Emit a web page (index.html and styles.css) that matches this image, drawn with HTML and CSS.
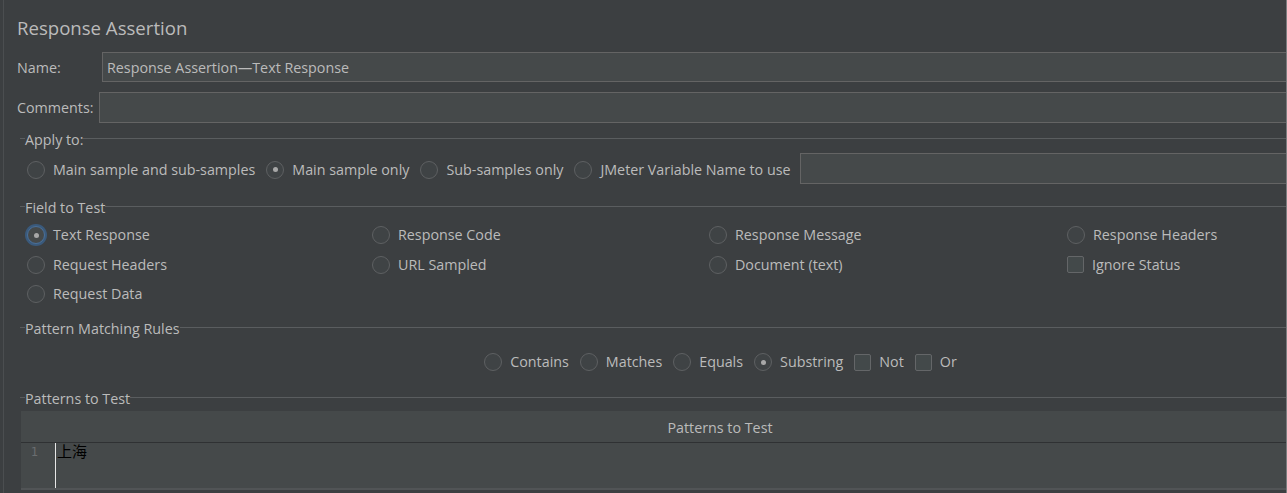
FILE: index.html
```html
<!DOCTYPE html>
<html>
<head>
<meta charset="utf-8">
<link rel="stylesheet" href="styles.css">
</head>
<body>
<div class="viewport">
  <div class="frame">
    <div class="title">Response Assertion</div>
    <div class="row name-row">
      <span class="label name-label">Name:</span>
      <div class="field">Response Assertion—Text Response</div>
    </div>
    <div class="row comments-row">
      <span class="label comments-label">Comments:</span>
      <div class="field"></div>
    </div>

    <section class="group apply">
      <div class="legend"><span>Apply to:</span></div>
      <div class="apply-row">
        <label class="opt"><span class="radio"></span><span>Main sample and sub-samples</span></label>
        <label class="opt"><span class="radio on"></span><span>Main sample only</span></label>
        <label class="opt"><span class="radio"></span><span>Sub-samples only</span></label>
        <label class="opt"><span class="radio"></span><span>JMeter Variable Name to use</span></label>
        <div class="field var-field"></div>
      </div>
    </section>

    <section class="group field-test">
      <div class="legend"><span>Field to Test</span></div>
      <div class="field-grid">
        <label class="opt"><span class="radio on focus"></span><span>Text Response</span></label>
        <label class="opt"><span class="radio"></span><span>Response Code</span></label>
        <label class="opt"><span class="radio"></span><span>Response Message</span></label>
        <label class="opt"><span class="radio"></span><span>Response Headers</span></label>
        <label class="opt"><span class="radio"></span><span>Request Headers</span></label>
        <label class="opt"><span class="radio"></span><span>URL Sampled</span></label>
        <label class="opt"><span class="radio"></span><span>Document (text)</span></label>
        <label class="opt"><span class="check"></span><span>Ignore Status</span></label>
        <label class="opt"><span class="radio"></span><span>Request Data</span></label>
      </div>
    </section>

    <section class="group pattern-rules">
      <div class="legend"><span>Pattern Matching Rules</span></div>
      <div class="rules-row">
        <label class="opt"><span class="radio"></span><span>Contains</span></label>
        <label class="opt"><span class="radio"></span><span>Matches</span></label>
        <label class="opt"><span class="radio"></span><span>Equals</span></label>
        <label class="opt"><span class="radio on"></span><span>Substring</span></label>
        <label class="opt"><span class="check"></span><span>Not</span></label>
        <label class="opt"><span class="check"></span><span>Or</span></label>
      </div>
    </section>

    <section class="group patterns">
      <div class="legend"><span>Patterns to Test</span></div>
      <div class="table">
        <div class="thead">Patterns to Test</div>
        <div class="tbody">
          <div class="gutter">1</div>
          <div class="editor">上海</div>
        </div>
      </div>
    </section>
  </div>
</div>
</body>
</html>
```

FILE: styles.css
```css
html, body {
  margin: 0;
  padding: 0;
  background: #3c3f41;
}

.viewport {
  width: 1287px;
  height: 493px;
  box-sizing: border-box;
  overflow: hidden;
  background: #3c3f41;
  border-right: 1px solid #7b7d7f;
  display: flex;
  font-family: "Open Sans", "Noto Sans", sans-serif;
  font-size: 14.3px;
  color: #bbbbbb;
}

.frame {
  flex: none;
  width: 1416px;
  margin-left: 3px;
  border-left: 1px solid #4b4e50;
  padding: 16px 0 0 13px;
  box-sizing: border-box;
}

.title {
  font-size: 18.6px;
  line-height: 24px;
  height: 24px;
}

.row {
  display: flex;
  align-items: center;
}

.name-row {
  margin-top: 12px;
  height: 30px;
}

.comments-row {
  margin-top: 10px;
  height: 31px;
}

.label { flex: none; }
.name-label { width: 85px; }
.comments-label { width: 82px; }

.field {
  flex: 1;
  height: 100%;
  box-sizing: border-box;
  background: #45494a;
  border: 1px solid #646464;
  padding: 0 4px;
  display: flex;
  align-items: center;
  color: #bbbbbb;
}

.group {
  margin-left: 3px;
}

.legend {
  display: flex;
  height: 16px;
  line-height: 16px;
}
.legend::before {
  content: "";
  width: 5px;
  height: 0;
  border-top: 1px solid #5a5d5f;
  margin-top: 6px;
  flex: none;
}
.legend::after {
  content: "";
  flex: 1;
  height: 0;
  border-top: 1px solid #5a5d5f;
  margin-top: 6px;
}

.apply { margin-top: 9px; }
.apply-row {
  margin-top: 5px;
  height: 31px;
  display: flex;
  align-items: center;
  gap: 11px;
  padding-left: 7px;
}
.apply-row .opt {
  margin-top: 2px;
}
.var-field {
  margin-left: -2px;
  height: 31px;
}

.opt {
  display: flex;
  align-items: center;
  gap: 8px;
  white-space: nowrap;
  line-height: 18px;
}

.radio {
  flex: none;
  width: 18px;
  height: 18px;
  box-sizing: border-box;
  border-radius: 50%;
  border: 1px solid #5e6062;
  background: #3f4345;
  display: flex;
  align-items: center;
  justify-content: center;
}
.radio.on::after {
  content: "";
  width: 5px;
  height: 5px;
  border-radius: 50%;
  background: #a8a8a8;
}
.radio.focus {
  border-color: #4a709a;
  background: #45494a;
  box-shadow: 0 0 0 2px #3a5a7c;
}

.check {
  flex: none;
  width: 17px;
  height: 17px;
  box-sizing: border-box;
  border-radius: 2px;
  border: 1px solid #646668;
  background: #43494a;
}

.field-test { margin-top: 16px; }
.field-grid {
  display: grid;
  grid-template-columns: 345px 337px 358px auto;
  grid-auto-rows: 29.5px;
  align-items: center;
  padding-left: 7px;
  margin-top: 4.5px;
}

.pattern-rules { margin-top: 12px; }
.rules-row {
  margin-top: 13px;
  height: 24px;
  display: flex;
  align-items: center;
  justify-content: center;
  gap: 11px;
  padding-left: 2px;
}

.patterns { margin-top: 17px; }
.table {
  margin-top: 4px;
  margin-left: 1px;
  background: #45494a;
}
.thead {
  height: 31px;
  line-height: 33px;
  text-align: center;
  border-bottom: 1px solid #2f3133;
}
.tbody {
  display: flex;
  height: 45px;
  border-bottom: 2px solid #515456;
}
.gutter {
  width: 34px;
  flex: none;
  box-sizing: border-box;
  padding: 2px 17px 0 0;
  text-align: right;
  font-family: "DejaVu Sans Mono", monospace;
  font-size: 12px;
  line-height: 14px;
  color: #6a6d70;
}
.editor {
  border-left: 1px solid #e6e6e6;
  padding: 0 0 0 1px;
  font-family: "Noto Sans CJK SC", sans-serif;
  font-size: 15px;
  line-height: 16px;
  color: #000000;
  flex: 1;
}
```
